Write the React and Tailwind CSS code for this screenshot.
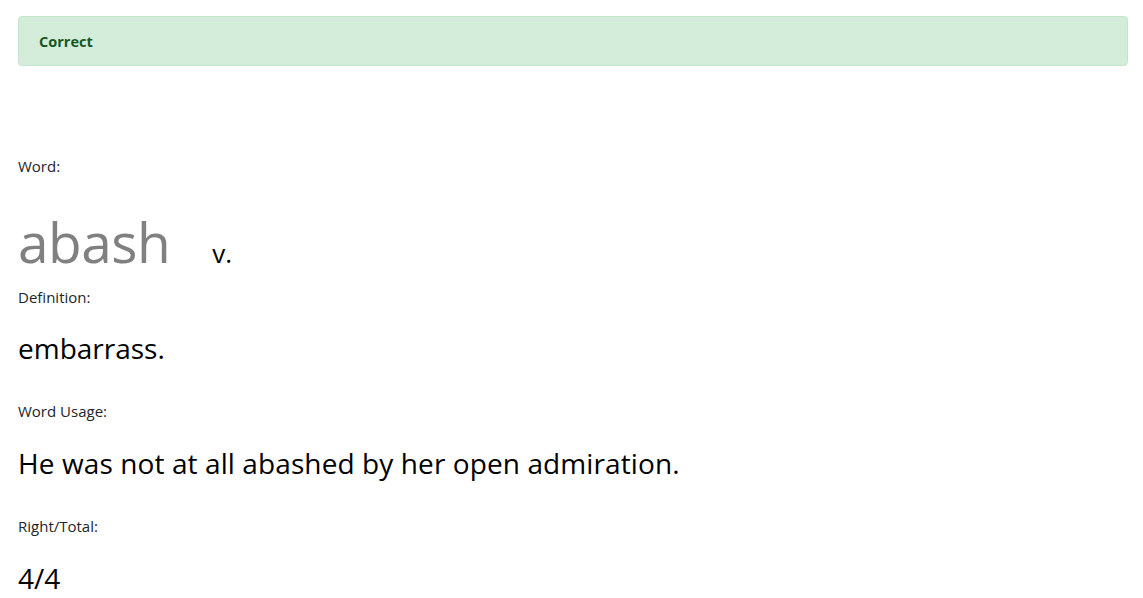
export default function App() {
  return (
    <div className="bg-white min-h-[598px] text-[#212529] font-['Open_Sans',sans-serif]">
      <div className="pt-4 pl-[18px] w-[1128px]">
        <div className="h-[50px] rounded border border-[#c3e6cb] bg-[#d4edda] text-[#155724] pl-5 pt-[2px] flex items-center">
          <span className="text-[14.5px] font-bold">Correct</span>
        </div>
        <div className="mt-[90px] text-[15px] leading-[21px]">Word:</div>
        <div className="mt-[31px] h-[79px] flex items-baseline">
          <span className="text-[55px] leading-[67px] font-normal text-[#808080] tracking-[-0.5px]">abash</span>
          <span className="ml-[42px] text-[26px] text-black">v.</span>
        </div>
        <div className="text-[15px] leading-[21px]">Definition:</div>
        <div className="mt-[23px] text-[28px] leading-[34px] text-black">embarrass.</div>
        <div className="mt-[36px] text-[15px] leading-[21px]">Word Usage:</div>
        <div className="mt-[24px] text-[28px] leading-[34px] text-black tracking-[0.1px]">He was not at all abashed by her open admiration.</div>
        <div className="mt-[36px] text-[15px] leading-[21px]">Right/Total:</div>
        <div className="mt-[24px] text-[28px] leading-[34px] text-black">4/4</div>
      </div>
    </div>
  );
}
